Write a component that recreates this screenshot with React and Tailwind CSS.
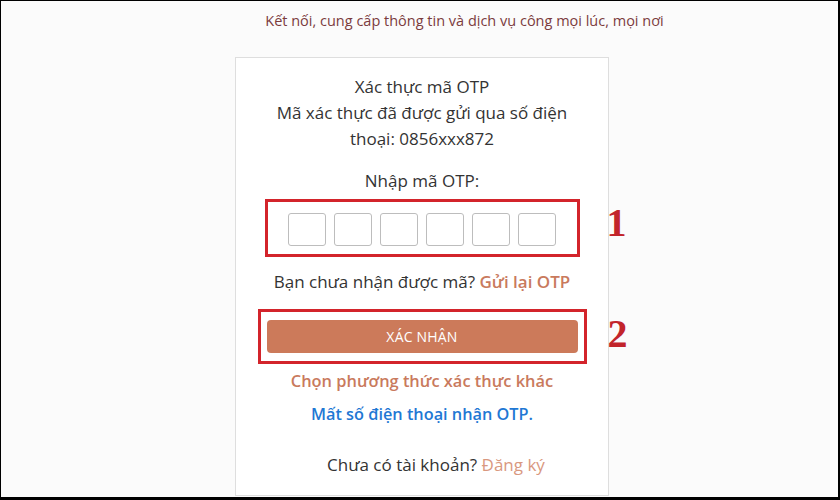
import React from "react";

const OtpBoxes = () => {
  const cells = [0, 1, 2, 3, 4, 5];
  return (
    <div className="flex justify-center gap-2">
      {cells.map((i) => (
        <input
          key={i}
          type="text"
          maxLength={1}
          className="w-[38px] h-[33px] border border-[#bdbdbd] rounded-[3px] bg-white outline-none text-center"
        />
      ))}
    </div>
  );
};

const App = () => {
  return (
    <div
      className="w-[840px] h-[500px] bg-[#fbfbfb] border-t border-l border-r-2 border-b-[3px] border-black overflow-hidden flex flex-col items-center"
      style={{ fontFamily: "'Open Sans', 'Noto Sans', sans-serif" }}
    >
      {/* tagline */}
      <p className="mt-[10px] h-[20px] leading-[20px] text-[14.5px] text-[#7b3b3e] ml-[90px]">
        Kết nối, cung cấp thông tin và dịch vụ công mọi lúc, mọi nơi
      </p>

      {/* card */}
      <div className="mt-[26px] ml-[5px] w-[374px] flex-1 bg-white border border-[#dedede] flex flex-col items-center pt-[16px] text-[17px] leading-[26px] text-[#333]">
        <p>Xác thực mã OTP</p>
        <p>Mã xác thực đã được gửi qua số điện</p>
        <p>thoại: 0856xxx872</p>

        <p className="mt-[16px]">Nhập mã OTP:</p>

        {/* annotated OTP block */}
        <div className="relative mt-[5px] w-[315px] border-[3px] border-[#d3242b] pt-[11px] pb-[8px]">
          <OtpBoxes />
          <span
            className="absolute left-full ml-[30px] top-[-3px] text-[40px] leading-[48px] font-bold text-[#c2242b]"
            style={{ fontFamily: "'Liberation Serif', serif" }}
          >
            1
          </span>
        </div>

        <p className="mt-[12px]">
          Bạn chưa nhận được mã?{" "}
          <span className="font-semibold text-[#c97a5d]">Gửi lại OTP</span>
        </p>

        {/* annotated confirm button */}
        <div className="relative mt-[14px] w-[329px] border-[3px] border-[#d3242b] px-[6px] pt-[8px] pb-[8px]">
          <button className="w-full h-[33px] rounded-[4px] bg-[#cc7a5a] text-white text-[14px] tracking-[0.2px]">
            XÁC NHẬN
          </button>
          <span
            className="absolute left-full ml-[24px] top-[-2px] text-[40px] leading-[48px] font-bold text-[#c2242b]"
            style={{ fontFamily: "'Liberation Serif', serif" }}
          >
            2
          </span>
        </div>

        <p className="mt-[4px] text-[16.4px] font-semibold text-[#c97a5d]">
          Chọn phương thức xác thực khác
        </p>
        <p className="mt-[7px] text-[16.3px] font-semibold text-[#1f78d4]">
          Mất số điện thoại nhận OTP.
        </p>

        <p className="mt-[25px] ml-[28px]">
          Chưa có tài khoản?{" "}
          <span className="text-[#d9987f]">Đăng ký</span>
        </p>
      </div>
      <div className="h-[1px]" />
    </div>
  );
};

export default App;
